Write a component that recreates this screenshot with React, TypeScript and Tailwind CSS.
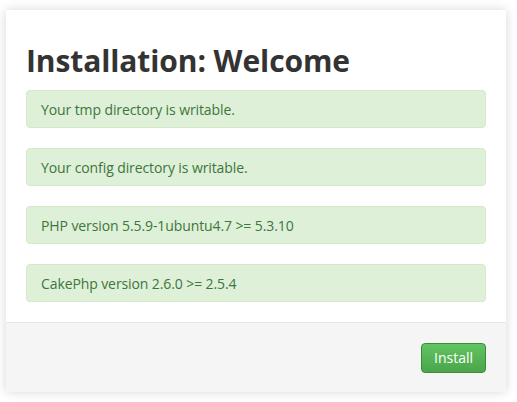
import * as React from 'react';

const checks = [
  'Your tmp directory is writable.',
  'Your config directory is writable.',
  'PHP version 5.5.9-1ubuntu4.7 >= 5.3.10',
  'CakePhp version 2.6.0 >= 2.5.4',
];

const App = () => {
  return (
    <div className="w-[517px] h-[402px] bg-white pt-[10px] pl-[6px] font-['Open_Sans',sans-serif]">
      <div className="w-[500px] h-[382px] bg-white flex flex-col shadow-[0_0_10px_rgba(0,0,0,0.16)]">
        <div className="px-[20px] pt-[20px] pb-[20px]">
          <h1 className="h-[60px] pt-[14px] text-[30px] leading-[34px] font-bold tracking-[-0.1px] text-[#333333]">
            Installation: Welcome
          </h1>
          <div className="flex flex-col gap-[20px]">
            {checks.map((c) => (
              <div
                key={c}
                className="h-[38px] px-[14px] flex items-center rounded-[4px] border border-[#d6e9c6] bg-[#dff0d8] text-[14px] tracking-[-0.1px] text-[#3c763d]"
              >
                {c}
              </div>
            ))}
          </div>
        </div>
        <div className="flex-1 border-t border-[#e5e5e5] bg-[#f5f5f5] flex items-center justify-end px-[20px]">
          <button className="w-[65px] h-[30px] rounded-[4px] border border-[#3d8b3d] bg-gradient-to-b from-[#62c462] to-[#4aa54a] text-white text-[14px]">
            Install
          </button>
        </div>
      </div>
    </div>
  );
};

export default App;
